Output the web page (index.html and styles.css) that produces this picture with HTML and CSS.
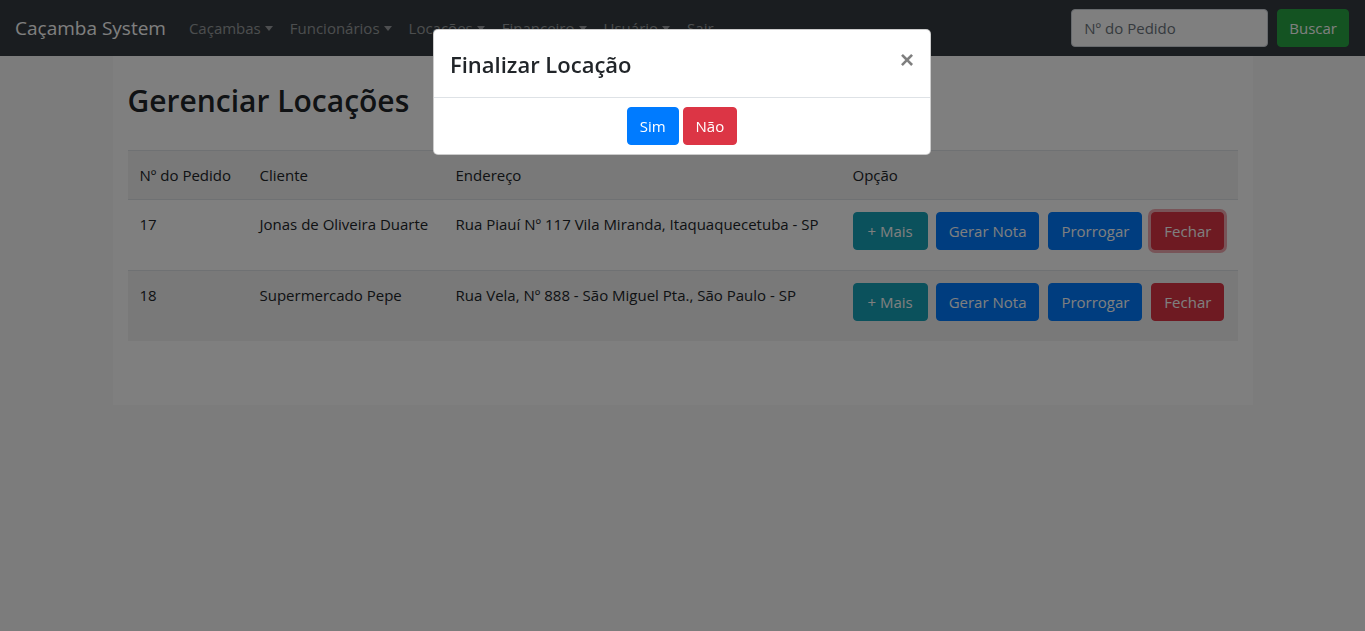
FILE: index.html
```html
<!DOCTYPE html>
<html lang="pt-BR">
<head>
<meta charset="utf-8">
<title>Caçamba System</title>
<link rel="stylesheet" href="styles.css">
</head>
<body>
<nav class="navbar">
  <a class="brand" href="#">Caçamba System</a>
  <ul class="nav">
    <li><a href="#" class="dropdown">Caçambas</a></li>
    <li><a href="#" class="dropdown">Funcionários</a></li>
    <li><a href="#" class="dropdown">Locações</a></li>
    <li><a href="#" class="dropdown">Financeiro</a></li>
    <li><a href="#" class="dropdown">Usuário</a></li>
    <li><a href="#">Sair</a></li>
  </ul>
  <form class="search">
    <input type="text" class="search-input" placeholder="Nº do Pedido">
    <button type="button" class="btn btn-success">Buscar</button>
  </form>
</nav>

<main class="container">
  <h2 class="title">Gerenciar Locações</h2>
  <table class="table">
    <thead>
      <tr>
        <th class="c1">Nº do Pedido</th>
        <th class="c2">Cliente</th>
        <th class="c3">Endereço</th>
        <th class="c4">Opção</th>
      </tr>
    </thead>
    <tbody>
      <tr>
        <td>17</td>
        <td>Jonas de Oliveira Duarte</td>
        <td>Rua Piauí Nº 117 Vila Miranda, Itaquaquecetuba - SP</td>
        <td class="opts">
          <button class="btn btn-info">+ Mais</button>
          <button class="btn btn-primary">Gerar Nota</button>
          <button class="btn btn-primary">Prorrogar</button>
          <button class="btn btn-danger focus">Fechar</button>
        </td>
      </tr>
      <tr class="odd">
        <td>18</td>
        <td>Supermercado Pepe</td>
        <td>Rua Vela, Nº 888 - São Miguel Pta., São Paulo - SP</td>
        <td class="opts">
          <button class="btn btn-info">+ Mais</button>
          <button class="btn btn-primary">Gerar Nota</button>
          <button class="btn btn-primary">Prorrogar</button>
          <button class="btn btn-danger">Fechar</button>
        </td>
      </tr>
    </tbody>
  </table>
</main>

<div class="backdrop"></div>

<div class="modal">
  <div class="modal-header">
    <h4 class="modal-title">Finalizar Locação</h4>
    <button class="close" type="button" aria-label="Fechar">&times;</button>
  </div>
  <div class="modal-body">
    <button class="btn btn-primary">Sim</button>
    <button class="btn btn-danger">Não</button>
  </div>
</div>
</body>
</html>
```

FILE: styles.css
```css
* { box-sizing: border-box; }

html, body {
  margin: 0;
  padding: 0;
  height: 100%;
}

body {
  font-family: "Open Sans", "Noto Sans", sans-serif;
  font-size: 15px;
  line-height: 24px;
  color: #212529;
  background: #f8f8f8;
}

.navbar {
  height: 56px;
  background: #343a40;
  display: flex;
  align-items: center;
  padding: 0 16px 0 15px;
}

.brand {
  color: #fff;
  font-size: 19px;
  text-decoration: none;
  margin-right: 23px;
}

.nav {
  list-style: none;
  margin: 0;
  padding: 0;
  display: flex;
  flex: 1;
  gap: 17px;
}

.nav a {
  color: rgba(255,255,255,.5);
  text-decoration: none;
  font-size: 15px;
}

.dropdown::after {
  content: "";
  display: inline-block;
  margin-left: 4px;
  vertical-align: 3px;
  border-top: 5px solid;
  border-left: 4px solid transparent;
  border-right: 4px solid transparent;
}

.search {
  display: flex;
  align-items: center;
  gap: 9px;
}

.search-input {
  width: 197px;
  height: 38px;
  padding: 6px 12px;
  font: inherit;
  font-size: 15px;
  border: 1px solid #ced4da;
  border-radius: 4px;
  background: #fff;
  color: #495057;
}

.search-input::placeholder { color: #6c757d; }

.btn {
  display: inline-block;
  height: 38px;
  padding: 6px 12px;
  font-family: inherit;
  font-size: 15px;
  line-height: 24px;
  color: #fff;
  border: 1px solid transparent;
  border-radius: 4px;
  cursor: pointer;
}

.btn-success { background: #28a745; border-color: #28a745; padding: 6px 11px; }
.btn-info { background: #17a2b8; border-color: #17a2b8; }
.btn-primary { background: #007bff; border-color: #007bff; }
.btn-danger { background: #dc3545; border-color: #dc3545; }
.btn-danger.focus { box-shadow: 0 0 0 3px rgba(225,83,97,.5); }

.container {
  width: 1140px;
  margin: 0 auto;
  padding: 16px 15px 48px;
  background: #fff;
}

.title {
  margin: 10px 0 30px;
  font-size: 30px;
  font-weight: 600;
  line-height: 38px;
}

.table {
  width: 100%;
  table-layout: fixed;
  border-collapse: collapse;
  margin-bottom: 16px;
}

.table th, .table td {
  padding: 12px;
  text-align: left;
  vertical-align: top;
  font-weight: 400;
  border-top: 1px solid #dee2e6;
}

.table thead tr { background: rgba(0,0,0,.05); }
.table tr.odd { background: rgba(0,0,0,.05); }

.c1 { width: 120px; }
.c2 { width: 196px; }
.c3 { width: 397px; }

.table td.opts {
  padding-bottom: 20px;
  white-space: nowrap;
}

.opts .btn { margin-right: 5px; }
.opts .btn-info { padding: 6px 14px; margin-right: 4px; }

.backdrop {
  position: fixed;
  inset: 0;
  background: rgba(0,0,0,.5);
}

.modal {
  position: fixed;
  top: 29px;
  left: 433px;
  width: 498px;
  background: #fff;
  border: 1px solid rgba(0,0,0,.2);
  border-radius: 5px;
}

.modal-header {
  display: flex;
  align-items: flex-start;
  justify-content: space-between;
  padding: 16px 16px 15px;
  border-bottom: 1px solid #dee2e6;
}

.modal-title {
  margin: 0;
  font-size: 22px;
  font-weight: 600;
  line-height: 36px;
}

.close {
  background: none;
  border: 0;
  padding: 0;
  margin-top: 2px;
  font-size: 24px;
  font-weight: 700;
  line-height: 24px;
  color: #000;
  opacity: .5;
  cursor: pointer;
}

.modal-body {
  padding: 9px;
  text-align: center;
}
```
